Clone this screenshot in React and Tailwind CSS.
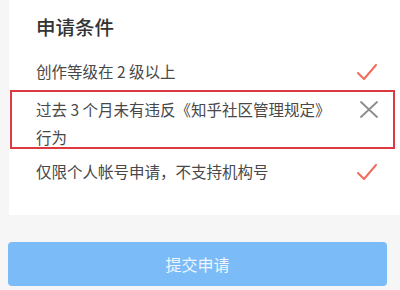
import React from "react";

const font = { fontFamily: '"Noto Sans CJK SC", "Noto Sans", sans-serif' };

function Check() {
  return (
    <svg width="20" height="17" viewBox="0 0 20 17" fill="none">
      <path d="M1 9 L7 15 L19 1" stroke="#f26b5b" strokeWidth="2" strokeLinecap="round" strokeLinejoin="round" />
    </svg>
  );
}

function Cross() {
  return (
    <svg width="18" height="17" viewBox="0 0 18 17" fill="none">
      <path d="M1 1 L17 16 M17 1 L1 16" stroke="#8c8c8c" strokeWidth="1.8" strokeLinecap="round" />
    </svg>
  );
}

export default function App() {
  return (
    <div className="w-[400px] h-[290px] bg-[#f6f6f6] overflow-hidden" style={font}>
      {/* Card */}
      <div className="ml-[9px] h-[215px] bg-white">
        <div className="pl-[27px] pt-[14px] text-[19.5px] leading-[26px] font-medium text-[#333]">
          申请条件
        </div>

        <div className="mt-[18px] flex items-center justify-between pl-[27px] pr-[23px] h-[28px] text-[15.5px] text-[#484848]">
          <span>创作等级在 2 级以上</span>
          <Check />
        </div>

        {/* Highlighted condition */}
        <div className="mt-[4px] ml-[1px] mr-[5px] h-[59px] border-2 border-[#dc3a40] flex items-start justify-between pl-[24px] pr-[15px] pt-[3px]">
          <span className="w-[300px] text-[15.5px] leading-[28px] text-[#484848]">
            过去 3 个月未有违反《知乎社区管理规定》行为
          </span>
          <div className="pt-[6px]">
            <Cross />
          </div>
        </div>

        <div className="mt-[9px] flex items-center justify-between pl-[27px] pr-[23px] h-[28px] text-[15.5px] text-[#484848]">
          <span>仅限个人帐号申请，不支持机构号</span>
          <Check />
        </div>
      </div>

      {/* Submit */}
      <div className="pl-[8px] pt-[27px]">
        <button className="w-[379px] h-[44px] rounded-[4px] bg-[#7bbcf8] text-[16px] text-[#eef5fd]">
          提交申请
        </button>
      </div>
    </div>
  );
}
